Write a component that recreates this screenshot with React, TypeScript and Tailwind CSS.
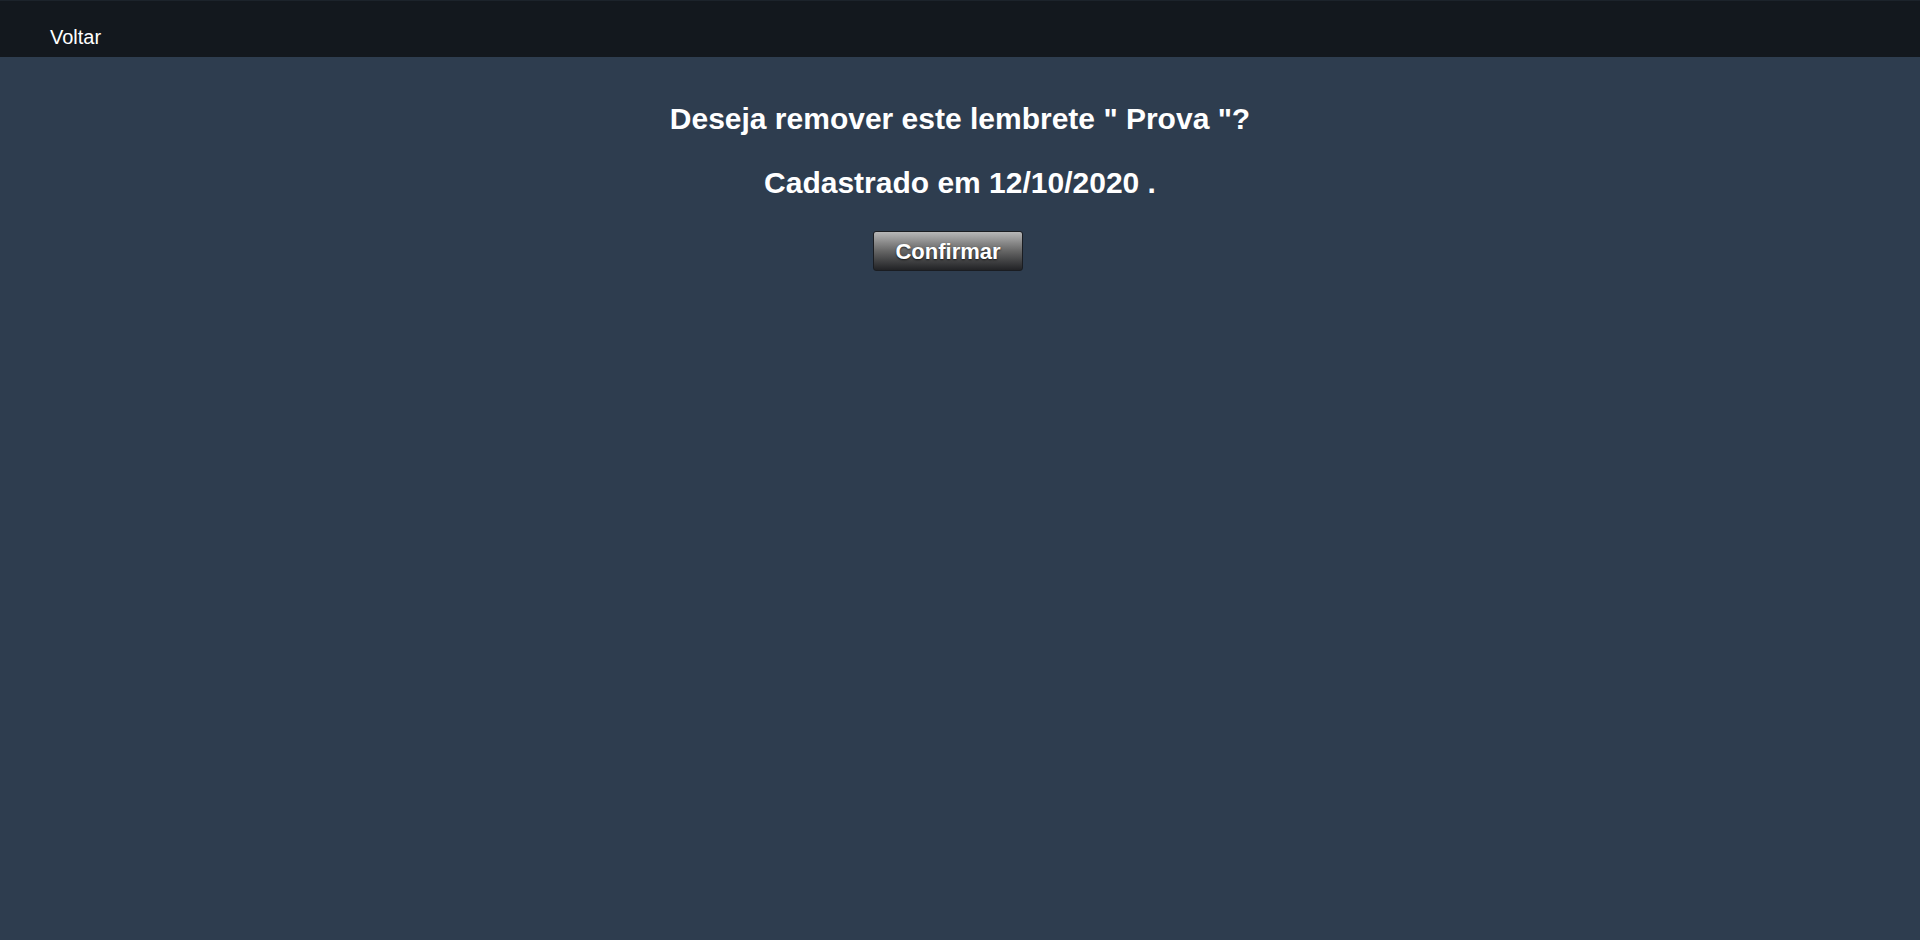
const App = (): JSX.Element => {
  return (
    <div className="min-h-[940px] w-full bg-[#2e3d4f] font-['Liberation_Sans',Arial,sans-serif] text-white">
      <header className="h-[57px] bg-[#13181e] border-t border-[#1c232b] pl-[50px] pt-[25px]">
        <a className="text-[20px] leading-[23px] text-white cursor-pointer">Voltar</a>
      </header>
      <main className="flex flex-col items-center pt-[45px]">
        <h2 className="text-[30px] leading-[34px] font-bold">
          Deseja remover este lembrete " Prova "?
        </h2>
        <h2 className="mt-[30px] text-[30px] leading-[34px] font-bold">
          Cadastrado em 12/10/2020 .
        </h2>
        <button className="mt-[31px] mr-[24px] w-[150px] h-[40px] rounded-[3px] border border-[#1a1d22] bg-gradient-to-b from-[#b8b8b8] via-[#666666] to-[#222326] text-[22px] font-bold text-white [text-shadow:0_1px_2px_rgba(0,0,0,0.7)]">
          Confirmar
        </button>
      </main>
    </div>
  );
};

export default App;
